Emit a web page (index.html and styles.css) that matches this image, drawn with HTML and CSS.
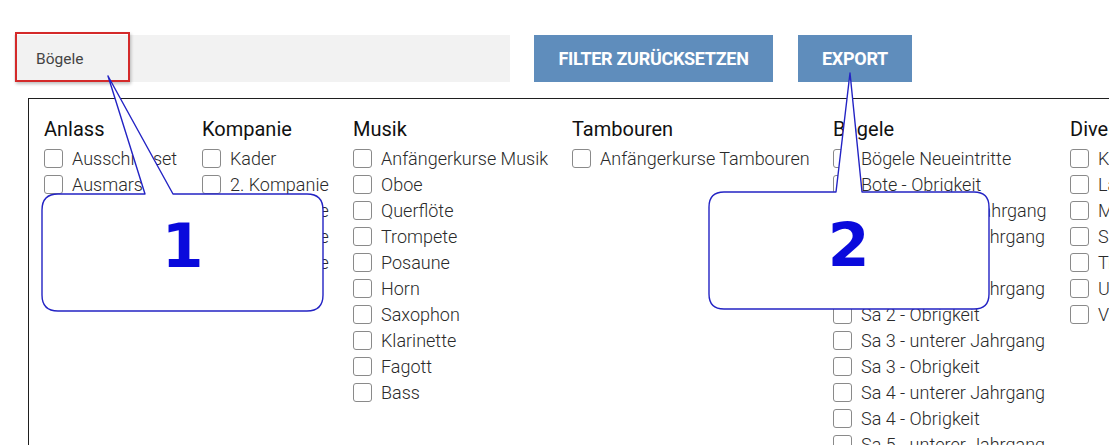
FILE: index.html
```html
<!DOCTYPE html>
<html lang="de">
<head>
<meta charset="utf-8">
<title>Filter</title>
<link rel="stylesheet" href="styles.css">
</head>
<body>
<div class="toolbar">
  <div class="search">Bögele</div>
  <button class="btn btn-reset">FILTER ZURÜCKSETZEN</button>
  <button class="btn btn-export">EXPORT</button>
</div>

<div class="filters">
  <div class="col">
    <div class="col-title">Anlass</div>
    <label class="item"><input type="checkbox"><span>Ausschiesset</span></label>
    <label class="item"><input type="checkbox"><span>Ausmarsch</span></label>
  </div>
  <div class="col">
    <div class="col-title">Kompanie</div>
    <label class="item"><input type="checkbox"><span>Kader</span></label>
    <label class="item"><input type="checkbox"><span>2. Kompanie</span></label>
    <label class="item"><input type="checkbox"><span>3. Kompanie</span></label>
    <label class="item"><input type="checkbox"><span>4. Kompanie</span></label>
    <label class="item"><input type="checkbox"><span>5. Kompanie</span></label>
  </div>
  <div class="col">
    <div class="col-title">Musik</div>
    <label class="item"><input type="checkbox"><span>Anfängerkurse Musik</span></label>
    <label class="item"><input type="checkbox"><span>Oboe</span></label>
    <label class="item"><input type="checkbox"><span>Querflöte</span></label>
    <label class="item"><input type="checkbox"><span>Trompete</span></label>
    <label class="item"><input type="checkbox"><span>Posaune</span></label>
    <label class="item"><input type="checkbox"><span>Horn</span></label>
    <label class="item"><input type="checkbox"><span>Saxophon</span></label>
    <label class="item"><input type="checkbox"><span>Klarinette</span></label>
    <label class="item"><input type="checkbox"><span>Fagott</span></label>
    <label class="item"><input type="checkbox"><span>Bass</span></label>
  </div>
  <div class="col">
    <div class="col-title">Tambouren</div>
    <label class="item"><input type="checkbox"><span>Anfängerkurse Tambouren</span></label>
  </div>
  <div class="col">
    <div class="col-title">Bögele</div>
    <label class="item"><input type="checkbox"><span>Bögele Neueintritte</span></label>
    <label class="item"><input type="checkbox"><span>Bote - Obrigkeit</span></label>
    <label class="item"><input type="checkbox"><span>Bote - unterer Jahrgang</span></label>
    <label class="item"><input type="checkbox"><span>Sa 1 - unterer Jahrgang</span></label>
    <label class="item"><input type="checkbox"><span>Sa 1 - Obrigkeit</span></label>
    <label class="item"><input type="checkbox"><span>Sa 2 - unterer Jahrgang</span></label>
    <label class="item"><input type="checkbox"><span>Sa 2 - Obrigkeit</span></label>
    <label class="item"><input type="checkbox"><span>Sa 3 - unterer Jahrgang</span></label>
    <label class="item"><input type="checkbox"><span>Sa 3 - Obrigkeit</span></label>
    <label class="item"><input type="checkbox"><span>Sa 4 - unterer Jahrgang</span></label>
    <label class="item"><input type="checkbox"><span>Sa 4 - Obrigkeit</span></label>
    <label class="item"><input type="checkbox"><span>Sa 5 - unterer Jahrgang</span></label>
  </div>
  <div class="col">
    <div class="col-title">Diverses</div>
    <label class="item"><input type="checkbox"><span>Kommission</span></label>
    <label class="item"><input type="checkbox"><span>Lager</span></label>
    <label class="item"><input type="checkbox"><span>Material</span></label>
    <label class="item"><input type="checkbox"><span>Schiessen</span></label>
    <label class="item"><input type="checkbox"><span>Trommler</span></label>
    <label class="item"><input type="checkbox"><span>Uniformen</span></label>
    <label class="item"><input type="checkbox"><span>Vorstand</span></label>
  </div>
</div>

<div class="highlight"></div>

<svg class="callouts" width="1109" height="445" viewBox="0 0 1109 445" xmlns="http://www.w3.org/2000/svg">
  <path class="bubble" d="M58 194 L145 194 L108 76 L173 194 L307 194 Q323 194 323 210 L323 295 Q323 311 307 311 L58 311 Q42 311 42 295 L42 210 Q42 194 58 194 Z"/>
  <text class="num" x="182.5" y="267" text-anchor="middle">1</text>
  <path class="bubble" d="M724 192 L836 192 L850 73 L862 192 L974 192 Q989 192 989 207 L989 294 Q989 309 974 309 L724 309 Q709 309 709 294 L709 207 Q709 192 724 192 Z"/>
  <text class="num" x="848.5" y="266" text-anchor="middle">2</text>
</svg>
</body>
</html>
```

FILE: styles.css
```css
html, body {
  margin: 0;
  padding: 0;
  overflow: hidden;
  background: #ffffff;
}

body {
  font-family: Roboto, "Liberation Sans", Arial, sans-serif;
  color: #333;
  width: 1109px;
  height: 445px;
  position: relative;
}

.toolbar {
  display: flex;
  align-items: stretch;
  gap: 24px;
  padding: 35px 0 0 14px;
  height: 47px;
}

.search {
  width: 474px;
  background: #f2f2f2;
  padding-left: 22px;
  font-size: 15.5px;
  color: #444;
  display: flex;
  align-items: center;
}

.btn {
  border: none;
  background: #5f8dbc;
  color: #fff;
  font-family: Roboto, "Liberation Sans", Arial, sans-serif;
  font-weight: 700;
  font-size: 18px;
  letter-spacing: -0.3px;
  padding: 0;
  margin: 0;
}

.btn-reset {
  width: 239px;
}

.btn-export {
  width: 114px;
  margin-left: 1px;
}

.filters {
  margin: 16px 0 0 28px;
  width: 1200px;
  height: 400px;
  border: 1px solid #1f1f1f;
  padding: 16px 0 0 15px;
  display: grid;
  grid-template-columns: 134px 127px 195px 237px 213px auto;
  column-gap: 24px;
  align-items: start;
}

.col {
  display: flex;
  flex-direction: column;
}

.col-title {
  font-size: 20px;
  font-weight: 400;
  color: #111;
  line-height: 28px;
  margin-bottom: 2px;
  white-space: nowrap;
}

.item {
  display: flex;
  align-items: center;
  height: 26px;
  gap: 9px;
  font-size: 18px;
  font-weight: 300;
  color: #2a2a2a;
  white-space: nowrap;
}

.item input {
  appearance: none;
  -webkit-appearance: none;
  width: 19px;
  height: 19px;
  margin: 0;
  border: 1px solid #8a8a8a;
  border-radius: 3px;
  background: #fff;
  flex: none;
}

.highlight {
  position: absolute;
  left: 15px;
  top: 32px;
  width: 111px;
  height: 46px;
  border: 2px solid #d42a2a;
  box-shadow: 1px 2px 3px rgba(0, 0, 0, 0.25);
}

.callouts {
  position: absolute;
  left: 0;
  top: 0;
  pointer-events: none;
}

.bubble {
  fill: #ffffff;
  stroke: #2323c4;
  stroke-width: 1.4;
  stroke-linejoin: round;
}

.num {
  font-family: "DejaVu Sans", Verdana, sans-serif;
  font-weight: 700;
  font-size: 60px;
  fill: #0a0adc;
}
```
